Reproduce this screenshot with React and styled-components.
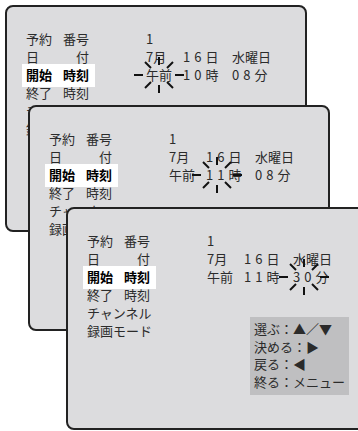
import React from "react";
import styled, { createGlobalStyle } from "styled-components";

const Global = createGlobalStyle`
  body {
    margin: 0;
    background: #fff;
  }
`;

const Canvas = styled.div`
  position: relative;
  width: 358px;
  height: 431px;
  overflow: hidden;
  background: #fff;
`;

// each OSD screen is a window laid on the page, so it sits at its own spot
const Screen = styled.div`
  position: absolute;
  left: ${(p) => p.$x}px;
  top: ${(p) => p.$y}px;
  width: ${(p) => p.$w}px;
  height: ${(p) => p.$h}px;
  box-sizing: border-box;
  border: 2px solid #222;
  border-radius: 8px;
  background: #dcdcde;
  padding: 23px 0 0 19px;
  font-family: "Noto Sans CJK JP", sans-serif;
  font-size: 13px;
  color: #2b2b2b;
`;

const Body = styled.div`
  display: grid;
  grid-template-columns: 163px 100px;
  grid-template-rows: 85px auto;
`;

const Menu = styled.div`
  grid-area: 1 / 1 / 3 / 3;
  display: grid;
  grid-template-columns: 120px 1fr;
  grid-auto-rows: 18px;
  line-height: 18px;
  white-space: nowrap;
`;

const Label = styled.div`
  display: flex;
  justify-content: space-between;
  width: 63px;
`;

const Selected = styled(Label)`
  background: #fff;
  color: #000;
  font-weight: bold;
  margin: -2px 0 -3px -4px;
  padding: 2px 6px 3px 4px;
`;

const Value = styled.div`
  display: grid;
  grid-template-columns: 37px 49px auto;
`;

const Num = styled.span`
  letter-spacing: 4px;
`;

const Blink = styled.span`
  position: relative;
  display: inline-block;
`;

const Rays = styled.svg`
  position: absolute;
  left: 50%;
  top: 50%;
  width: 56px;
  height: 40px;
  transform: translate(-50%, -50%);
  pointer-events: none;
`;

const Help = styled.div`
  grid-area: 2 / 2;
  align-self: start;
  width: 91px;
  background: #bfbfc1;
  padding: 3px 4px 5px;
  line-height: 17.5px;
  white-space: nowrap;
  color: #2b2b2b;
`;

const Sparkle = ({ children }) => (
  <Blink>
    {children}
    <Rays viewBox="0 0 56 40">
      <g stroke="#111" strokeWidth="2" strokeLinecap="butt">
        <line x1="3" y1="20" x2="12" y2="20" />
        <line x1="44" y1="20" x2="53" y2="20" />
        <line x1="28" y1="2" x2="28" y2="10" />
        <line x1="28" y1="30" x2="28" y2="38" />
        <line x1="14" y1="7" x2="20" y2="13" />
        <line x1="42" y1="7" x2="36" y2="13" />
        <line x1="14" y1="33" x2="20" y2="27" />
        <line x1="42" y1="33" x2="36" y2="27" />
      </g>
    </Rays>
  </Blink>
);

const ReserveScreen = ({ x, y, h, hour, minute, blink, help }) => (
  <Screen $x={x} $y={y} $w={302} $h={h}>
    <Body>
      <Menu>
        <Label>
          <span>予約</span>
          <span>番号</span>
        </Label>
        <Value>
          <span>1</span>
        </Value>
        <Label>
          <span>日</span>
          <span>付</span>
        </Label>
        <Value>
          <span>7月</span>
          <span>
            <Num>16</Num>日
          </span>
          <span>水曜日</span>
        </Value>
        <Selected>
          <span>開始</span>
          <span>時刻</span>
        </Selected>
        <Value>
          <span>{blink === "ampm" ? <Sparkle>午前</Sparkle> : "午前"}</span>
          <span>
            {blink === "hour" ? (
              <Sparkle>
                <Num>{hour}</Num>
              </Sparkle>
            ) : (
              <Num>{hour}</Num>
            )}
            時
          </span>
          <span>
            {blink === "minute" ? (
              <Sparkle>
                <Num>{minute}</Num>
              </Sparkle>
            ) : (
              <Num>{minute}</Num>
            )}
            分
          </span>
        </Value>
        <Label>
          <span>終了</span>
          <span>時刻</span>
        </Label>
        <Value />
        <Label>チャンネル</Label>
        <Value />
        <Label>録画モード</Label>
        <Value />
      </Menu>
      {help && (
        <Help>
          <div>選ぶ：▲／▼</div>
          <div>決める：▶</div>
          <div>戻る：◀</div>
          <div>終る：メニュー</div>
        </Help>
      )}
    </Body>
  </Screen>
);

export default function App() {
  return (
    <Canvas>
      <Global />
      <ReserveScreen x={5} y={5} h={227} hour="10" minute="08" blink="ampm" />
      <ReserveScreen x={28} y={105} h={226} hour="11" minute="08" blink="hour" />
      <ReserveScreen x={66} y={207} h={223} hour="11" minute="30" blink="minute" help />
    </Canvas>
  );
}
